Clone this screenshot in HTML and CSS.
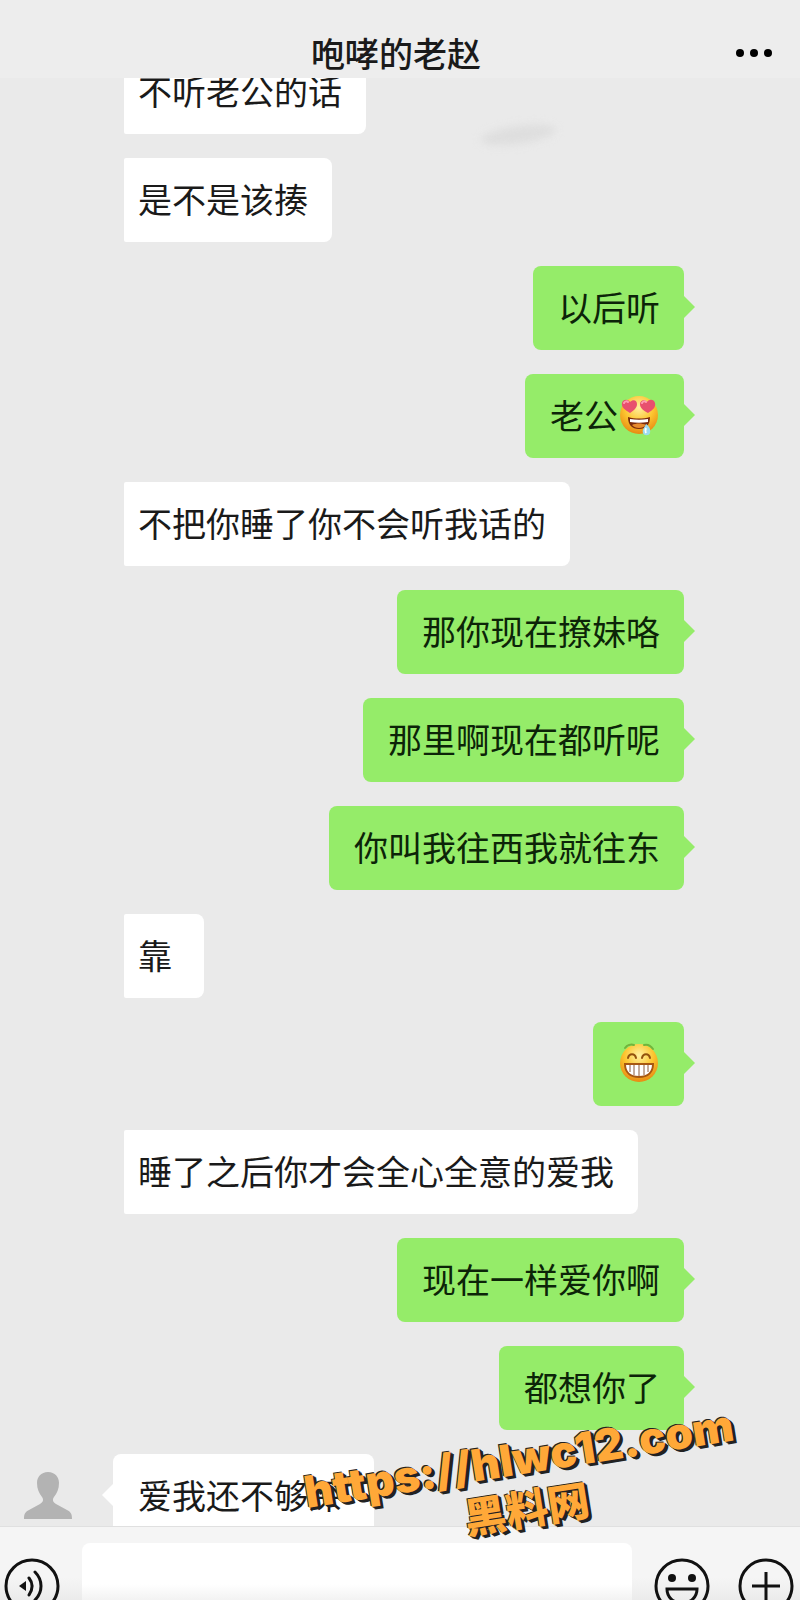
FILE: index.html
```html
<!DOCTYPE html>
<html lang="zh-CN">
<head>
    <meta charset="UTF-8">
    <meta name="viewport" content="width=device-width, initial-scale=1.0">
    <title>咆哮的老赵</title>
    <link rel="stylesheet" href="styles.css">
</head>
<body>
<header class="chat-header">
    <h1>咆哮的老赵</h1>
    <button type="button" class="more-button" aria-label="更多">
        <svg width="36" height="10" viewBox="0 0 36 10"><circle cx="4" cy="5" r="4"/><circle cx="18" cy="5" r="4"/><circle cx="32" cy="5" r="4"/></svg>
    </button>
</header>

<main class="chat-body">
    <div class="smudge"></div>
    <div class="messages">
        <div class="message received"><p class="bubble">不听老公的话</p></div>
        <div class="message received"><p class="bubble">是不是该揍</p></div>
        <div class="message sent"><p class="bubble">以后听</p></div>
        <div class="message sent">
            <p class="bubble">老公<svg class="emoji" viewBox="0 0 42 42" role="img" aria-label="色">
                <defs>
                    <radialGradient id="face" cx="50%" cy="30%" r="70%">
                        <stop offset="0" stop-color="#fff0a0"/>
                        <stop offset="0.55" stop-color="#fcc52f"/>
                        <stop offset="1" stop-color="#e88a12"/>
                    </radialGradient>
                </defs>
                <circle cx="21" cy="21" r="19" fill="url(#face)"/>
                <path d="M12 19C7 16 3 13 4 9c1-4 6-4 8-1 3-3 7-2 7 2 0 4-3 6-7 9z" fill="#e8506e"/>
                <path d="M30 19c-5-3-8-5-8-9 0-4 5-5 7-2 2-3 7-3 8 1 1 4-2 7-7 10z" fill="#e8506e"/>
                <path d="M6 9c1-2 3-2 4-1M24 9c1-2 3-2 4-1" stroke="#ff9db0" stroke-width="2" fill="none" stroke-linecap="round"/>
                <path d="M10 23c7 2 15 2 22 0 0 8-4 12-11 12s-11-4-11-12z" fill="#7a2a0c"/>
                <path d="M12 25c6 1 12 1 18 0v3c-6 1-12 1-18 0z" fill="#fff"/>
                <path d="M14 31c4-2 10-2 14 0-3 4-11 4-14 0z" fill="#e88b2e"/>
                <path d="M28 30c3 2 5 5 4 9-1 3-6 3-7 0-1-3 1-5 3-9z" fill="#9bdcf0"/>
                <path d="M28 34c-1 2-1 3 0 5" stroke="#fff" stroke-width="2" fill="none"/>
            </svg></p>
        </div>
        <div class="message received"><p class="bubble">不把你睡了你不会听我话的</p></div>
        <div class="message sent"><p class="bubble">那你现在撩妹咯</p></div>
        <div class="message sent"><p class="bubble">那里啊现在都听呢</p></div>
        <div class="message sent"><p class="bubble">你叫我往西我就往东</p></div>
        <div class="message received"><p class="bubble">靠</p></div>
        <div class="message sent">
            <p class="bubble"><svg class="emoji" viewBox="0 0 42 42" role="img" aria-label="呲牙">
                <circle cx="21" cy="21" r="19" fill="url(#face)"/>
                <path d="M7 6c2-3 6-4 9-3M26 3c4-1 7 1 9 4" stroke="#72b43c" stroke-width="2" fill="none" stroke-linecap="round"/>
                <path d="M10 16c1-5 7-5 8 0M24 16c1-5 7-5 8 0" stroke="#91510c" stroke-width="2" fill="none" stroke-linecap="round"/>
                <path d="M7 22h28c0 8-5 13-14 13S7 30 7 22z" fill="#fff" stroke="#a75712" stroke-width="2"/>
                <path d="M12 23v7M16 23v10M21 23v11M26 23v10M30 23v7" stroke="#8a5a3c" stroke-width="1"/>
            </svg></p>
        </div>
        <div class="message received"><p class="bubble">睡了之后你才会全心全意的爱我</p></div>
        <div class="message sent"><p class="bubble">现在一样爱你啊</p></div>
        <div class="message sent"><p class="bubble">都想你了</p></div>
        <div class="message received latest">
            <svg class="avatar" viewBox="0 0 48 48" role="img" aria-label="头像">
                <path d="M24 0c7 0 11 5 11 11 0 6-2 10-5 14-2 3-1 5 2 7l11 6c4 2 5 4 5 9H0c0-5 1-7 5-9l11-6c3-2 4-4 2-7-3-4-5-8-5-14C13 5 17 0 24 0z" fill="#b3b3b3"/>
            </svg>
            <p class="bubble">爱我还不够深</p>
        </div>
    </div>
</main>

<footer class="chat-footer">
    <button type="button" aria-label="语音">
        <svg width="56" height="56" viewBox="0 0 56 56" fill="none" stroke="#111" stroke-width="3">
            <circle cx="28" cy="28" r="26"/>
            <path d="M15 28l7-5v10z" fill="#111" stroke="none"/>
            <path d="M25 20c4 5 4 11 0 17M31 14c8 8 8 20 0 28" stroke-linecap="round"/>
        </svg>
    </button>
    <input type="text" aria-label="消息">
    <div class="tools">
        <button type="button" aria-label="表情">
            <svg width="56" height="56" viewBox="0 0 56 56" fill="none" stroke="#111" stroke-width="3">
                <circle cx="28" cy="28" r="26"/>
                <circle cx="18" cy="20" r="4" fill="#111" stroke="none"/>
                <circle cx="38" cy="20" r="4" fill="#111" stroke="none"/>
                <path d="M13 31h30c0 8-6 14-15 14s-15-6-15-14z"/>
            </svg>
        </button>
        <button type="button" aria-label="添加">
            <svg width="56" height="56" viewBox="0 0 56 56" fill="none" stroke="#111" stroke-width="3">
                <circle cx="28" cy="28" r="26"/>
                <path d="M28 14v28M14 28h28"/>
            </svg>
        </button>
    </div>
</footer>

<div class="watermark">
    <span>https://hlwc12.com</span>
    <span class="site-name">黑料网</span>
</div>
</body>
</html>
```
FILE: styles.css
```css
* {
    box-sizing: border-box;
}
body {
    position: relative;
    display: flex;
    flex-direction: column;
    height: 100vh;
    margin: 0;
    overflow: hidden;
    background-color: #eaeaea;
    color: #1a1a1a;
    font-family: "Noto Sans CJK SC", "Noto Sans", sans-serif;
    font-size: 34px;
}
button {
    display: block;
    padding: 0;
    border: none;
    background: none;
    cursor: pointer;
}
svg {
    display: block;
}

/* 顶部标题 */
.chat-header {
    display: grid;
    grid-template-columns: 1fr auto 1fr;
    align-items: center;
    flex: none;
    height: 78px;
    padding: 28px 28px 0 20px;
    background-color: #ededed;
}
.chat-header h1 {
    grid-column: 2;
    margin: 0;
    font-size: 34px;
    font-weight: 500;
    line-height: 48px;
}
.more-button {
    justify-self: end;
}

/* 消息列表 */
.chat-body {
    position: relative;
    flex: 1;
    min-height: 0;
    overflow: hidden;
}
.smudge {
    position: absolute;
    top: 48px;
    left: 60%;
    width: 76px;
    height: 18px;
    border-radius: 50%;
    background-color: #dedede;
    filter: blur(4px);
    transform: rotate(-8deg);
}
.messages {
    display: flex;
    flex-direction: column;
    gap: 24px;
    margin-top: -28px;
    padding: 0 116px 0 124px;
}
.message {
    display: flex;
}
.sent {
    justify-content: flex-end;
}
.bubble {
    position: relative;
    display: flex;
    align-items: center;
    min-width: 80px;
    height: 84px;
    margin: 0;
    padding: 0 24px 2px 14px;
    border-radius: 2px 8px 8px 2px;
    background-color: #fff;
    line-height: 50px;
    white-space: nowrap;
}
.sent .bubble {
    padding-left: 25px;
    border-radius: 8px;
    background-color: #95ec69;
    color: #0c2408;
}
.sent .bubble::after,
.latest .bubble::before {
    content: "";
    position: absolute;
    top: 30px;
    border: 11px solid transparent;
}
.sent .bubble::after {
    left: 100%;
    border-left-color: #95ec69;
    border-right: none;
}
.latest .bubble::before {
    right: 100%;
    border-right-color: #fff;
    border-left: none;
}
.emoji {
    width: 42px;
    height: 42px;
}
.latest {
    gap: 41px;
    margin-left: -100px;
}
.latest .bubble {
    padding-right: 32px;
    padding-left: 25px;
    border-radius: 8px;
}
.avatar {
    width: 48px;
    height: 48px;
    margin-top: 18px;
}

/* 底部输入栏 */
.chat-footer {
    display: flex;
    align-items: flex-start;
    flex: none;
    gap: 22px;
    height: 74px;
    padding: 16px 6px 0 4px;
    overflow: hidden;
    border-top: 1px solid #e0e0e0;
    background: linear-gradient(#f5f5f5 70%, #ebebeb);
}
.chat-footer button {
    margin-top: 15px;
}
.chat-footer input {
    flex: 1;
    min-width: 0;
    height: 86px;
    padding: 0 20px;
    border: none;
    border-radius: 8px;
    background: linear-gradient(#fff 48%, #f0f0f0 70%);
    font: inherit;
}
.tools {
    display: flex;
    gap: 28px;
}

/* 水印 */
.watermark {
    position: absolute;
    right: 60px;
    bottom: 64px;
    display: flex;
    flex-direction: column;
    align-items: center;
    color: #ffa838;
    font-family: Inter, "Noto Sans CJK SC", sans-serif;
    font-size: 44px;
    font-weight: 900;
    line-height: 52px;
    text-shadow: -1px -1px 0 #222, 1px 1px 0 #222, 2px 2px 0 #222, 3px 3px 0 #222;
    transform: rotate(-9deg);
    pointer-events: none;
}
.site-name {
    font-size: 42px;
}
```
